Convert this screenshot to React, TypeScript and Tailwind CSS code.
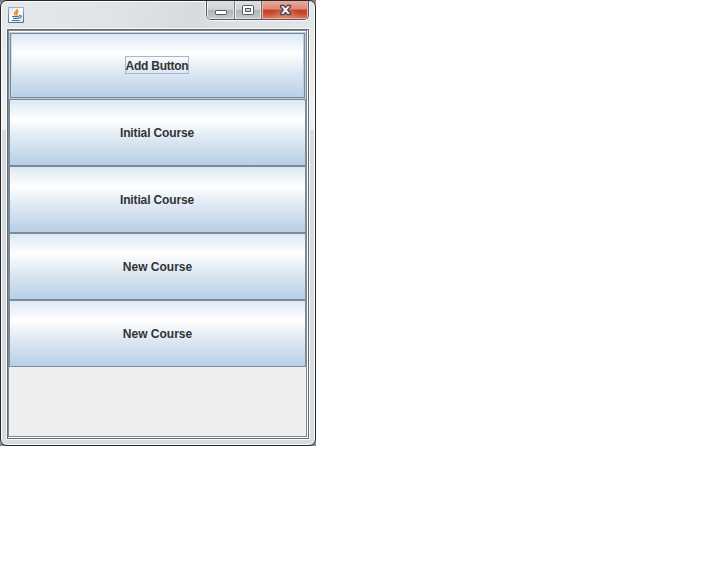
const COURSES = ['Initial Course', 'Initial Course', 'New Course', 'New Course'];

const METAL =
  'bg-[linear-gradient(180deg,#dde8f3_0%,#ffffff_30%,#dde8f3_60%,#b8cfe5_100%)]';

function JavaIcon() {
  return (
    <svg width="16" height="16" viewBox="0 0 16 16" className="block">
      <defs>
        <linearGradient id="tile" x1="0" y1="0" x2="0" y2="1">
          <stop offset="0" stopColor="#9db3c3" />
          <stop offset="1" stopColor="#46718f" />
        </linearGradient>
        <linearGradient id="face" x1="0" y1="0" x2="1" y2="1">
          <stop offset="0" stopColor="#dce7ee" />
          <stop offset=".5" stopColor="#ffffff" />
          <stop offset="1" stopColor="#d3e0e9" />
        </linearGradient>
      </defs>
      <rect width="16" height="16" rx="1.2" fill="url(#tile)" />
      <rect x="1" y="1" width="14" height="14" fill="url(#face)" />
      <path d="M9.3 2C10 4.2 6.2 4.9 6.5 6.5c.2.8.9 1.1 1.1 2M10.9 4.4C9 5.2 8 6 8.9 7c.5.6.2 1.1-.3 1.6" fill="none" stroke="#ee7f1b" strokeWidth="1.5" />
      <path d="M4 9.5h7M5 11.4h5.5M3.7 13.5h7.8M11 8.7c3.2-.8 2.8 2-.3 2.5" fill="none" stroke="#4a7896" strokeWidth="1.2" />
    </svg>
  );
}

function WindowControls() {
  return (
    <div className="mr-[6px] flex h-[19px] w-[103px] overflow-hidden rounded-b-[5px] border border-t-0 border-[#55575c] shadow-[0_1px_0_#f8fafa,-1px_0_0_#f1f4f5,1px_0_0_#f1f4f5]">
      <div className="h-full w-[28px] border-r border-[#777b80] bg-[linear-gradient(180deg,#dfe0e1_0%,#cfd0d2_48%,#aeb1b5_50%,#c7cbcf_100%)] shadow-[inset_1px_0_0_#f0f0f0,inset_-1px_-1px_0_#e2e4e6]">
        <svg width="27" height="18" className="block">
          <rect x="8.5" y="9.5" width="11" height="4" rx=".7" fill="#fff" stroke="#55586a" />
        </svg>
      </div>
      <div className="h-full w-[27px] border-r border-[#74666a] bg-[linear-gradient(180deg,#dfe0e1_0%,#cfd0d2_48%,#aeb1b5_50%,#c7cbcf_100%)] shadow-[inset_1px_0_0_#f0f0f0,inset_-1px_-1px_0_#e2e4e6]">
        <svg width="26" height="18" className="block">
          <rect x="7.5" y="4.5" width="11" height="9" rx=".7" fill="#fff" stroke="#55586a" />
          <rect x="10.5" y="7.5" width="5" height="3" fill="#d1d3d8" stroke="#55586a" />
        </svg>
      </div>
      <div className="h-full flex-1 bg-[radial-gradient(ellipse_at_50%_100%,#e5835f_0%,transparent_50%),linear-gradient(180deg,#e9aca0_0%,#dc8473_46%,#c33b25_50%,#c94d34_72%,#dc8064_100%)] shadow-[inset_1px_0_0_#f1b5a8,inset_-1px_-1px_0_#edb6a8]">
        <svg width="46" height="18" className="block">
          <path d="M18.5 4.5h3.3l1.7 2 1.7-2h3.3v1.3L25.7 9l2.8 3.2v1.3h-3.3l-1.7-2-1.7 2h-3.3v-1.3l2.8-3.2-2.8-3.2z" fill="#f7f5f6" stroke="#4b4a60" strokeWidth="1.3" strokeLinejoin="round" />
        </svg>
      </div>
    </div>
  );
}

export default function App() {
  return (
    <div className="h-[566px] w-[716px] overflow-hidden bg-white font-['Liberation_Sans',Arial,sans-serif]">
      <div className="h-[446px] w-[316px] bg-[linear-gradient(180deg,#77777c_0%,#ffffff_3%,#ffffff_97%,#77777c_100%)]">
        <div className="flex h-[446px] w-[316px] flex-col rounded-[7px] border border-[#26262b] bg-[linear-gradient(180deg,transparent_0px,transparent_129px,#d8dce1_129px,#d8dce1_100%),linear-gradient(180deg,transparent_0px,transparent_28px,#f0eff1_100px,#f0eff1_129px,transparent_129px),linear-gradient(105deg,#e6e8ea_0px,#e0e4e7_110px,#d6dbe0_190px,#dfe3e6_250px,#e5e8ea_330px)] shadow-[inset_0_0_0_1px_#fafbfb]">
          <div className="flex h-[27px] shrink-0 items-start justify-between pl-[7px]">
            <div className="pt-[6px]"><JavaIcon /></div>
            <WindowControls />
          </div>
          <div className="mx-[5px] h-[412px] shrink-0 border border-[#f7f8f8]">
            <div className="h-[410px] w-[302px] border border-[#626b70]">
              <div className="h-[408px] w-[300px] border-r border-b border-white">
                <div className="flex h-[407px] w-[299px] flex-col border border-[#7a8a99] bg-[#eeeeee]">
                  <div className="h-px shrink-0 bg-white" />
                  <button className="block h-[67px] w-[297px] shrink-0 border border-[#b8cfe5] p-0">
                    <span className={`flex h-[65px] w-[295px] items-center justify-center border border-[#7a8a99] pr-px pb-[2px] shadow-[inset_-1px_0_0_#b8cfe5,inset_1px_0_0_#ccdbea] ${METAL}`}>
                      <span className="flex h-[18px] w-[64px] items-center justify-center border border-[#a3b8cc] text-[12px] leading-[14px] font-bold tracking-[-0.25px] whitespace-nowrap text-[#333333]">
                        <span className="pt-[2px]">Add Button</span>
                      </span>
                    </span>
                  </button>
                  {COURSES.map((label, i) => (
                    <button
                      key={i}
                      className={`flex h-[67px] w-[297px] shrink-0 items-center justify-center border border-[#7a8a99] text-[12px] leading-[14px] font-bold text-[#333333] ${
                        label === 'Initial Course' ? 'pr-px tracking-[-0.14px]' : 'p-0'
                      } ${METAL}`}
                    >
                      {label}
                    </button>
                  ))}
                </div>
              </div>
            </div>
          </div>
        </div>
      </div>
    </div>
  );
}
